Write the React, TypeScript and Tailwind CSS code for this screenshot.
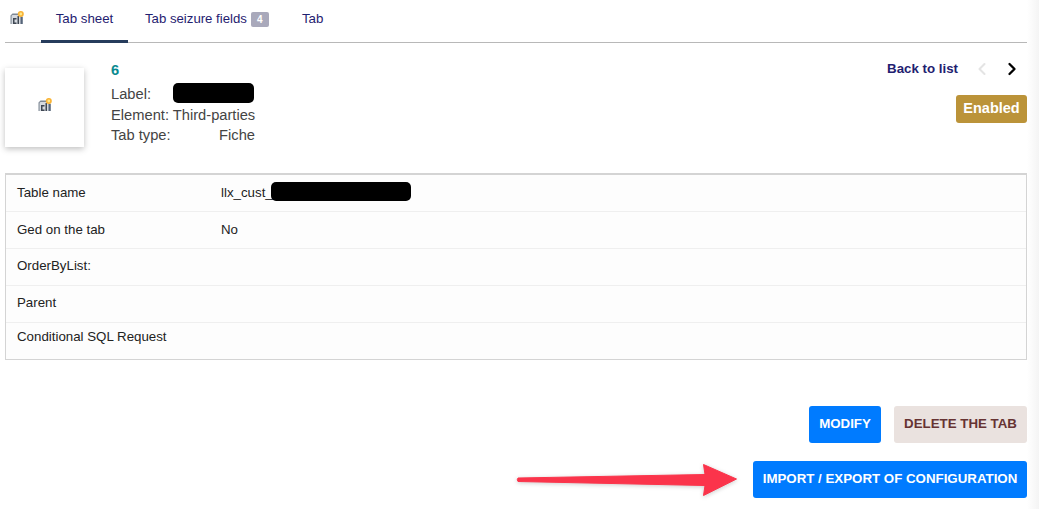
import { ChevronLeft, ChevronRight } from "lucide-react";

const rows = [
  { label: "Table name", value: "llx_cust_", hidden: true, pad: "pt-[10px]" },
  { label: "Ged on the tab", value: "No", pad: "pt-[10px]" },
  { label: "OrderByList:", value: "", pad: "pt-[9px]" },
  { label: "Parent", value: "", pad: "pt-[9px]" },
  { label: "Conditional SQL Request", value: "", pad: "pt-[6px]" },
];

function TabIcon({ className }: { className?: string }) {
  return (
    <svg viewBox="0 0 14 13" className={className}>
      <path d="M0.5 13V4.5L2.5 2.5H9V4.2H3L1.8 5.2V13z" fill="#7d8794" />
      <rect x="1.8" y="4.2" width="11" height="8.8" fill="#d5d9df" />
      <path d="M3 7H6.5V8.4H4.5V11.6H6.5V13H3z" fill="#3f4753" />
      <rect x="7.5" y="5" width="1.5" height="8" fill="#3f4753" />
      <rect x="10.5" y="6" width="2.2" height="7" fill="#56657a" />
      <circle cx="10.8" cy="3" r="3" fill="#f9b233" />
      <circle cx="10.8" cy="3" r="1.4" fill="#fde68a" />
    </svg>
  );
}

export default function App() {
  return (
    <div className="flex h-[509px] w-[1039px] overflow-hidden bg-white font-['Liberation_Sans',Arial,sans-serif] text-[13.3px] text-[#444]">
      <div className="w-[1027px] shrink-0 pl-[5px]">
        {/* Tabs */}
        <div className="flex h-[43px] border-b border-[#b8b8b8]">
          <div className="flex w-[36px] items-start pl-[5px] pt-[11px]">
            <TabIcon className="h-[13px] w-[14px]" />
          </div>
          <div className="-mb-px flex h-[43px] w-[87px] justify-center border-b-[3px] border-[#263c5c] pt-[9px] text-[#1f2170]">
            Tab sheet
          </div>
          <div className="flex items-start pl-[17px] pt-[9px] text-[13.2px] text-[#1f2170]">
            Tab seizure fields
            <span className="ml-[4px] mt-[3px] flex h-[15px] w-[18px] items-center justify-center rounded-[2px] bg-[#a9a9bb] text-[10px] font-bold text-white">
              4
            </span>
          </div>
          <div className="pl-[33px] pt-[9px] text-[#1f2170]">Tab</div>
        </div>

        {/* Card banner */}
        <div className="flex h-[130px] items-start">
          <div className="mt-[25px] flex h-[79px] w-[79px] items-center justify-center bg-white shadow-[0_2px_6px_rgba(0,0,0,0.25)]">
            <TabIcon className="-mt-[6px] h-[13px] w-[14px]" />
          </div>
          <div className="ml-[27px] mt-[16px] w-[144px] whitespace-nowrap text-[14.7px]">
            <div className="h-[25px] font-bold leading-[22px] text-[#0a8a8f]">6</div>
            <div className="flex h-[20px] items-center leading-[20px]">
              <span className="w-[62px]">Label:</span>
              <span className="-mt-[2px] h-[20px] w-[81px] rounded-[5px] bg-black" />
            </div>
            <div className="mt-[1px] h-[20px] leading-[20px]">Element: Third-parties</div>
            <div className="flex h-[20px] justify-between leading-[20px]">
              <span>Tab type:</span>
              <span>Fiche</span>
            </div>
          </div>
          <div className="ml-auto mt-[16px] flex flex-col items-end">
            <div className="flex h-[20px] items-center">
              <span className="font-bold text-[#1f2170]">Back to list</span>
              <ChevronLeft className="ml-[14px] h-[20px] w-[20px] text-[#e4e4e4]" strokeWidth={2.5} />
              <ChevronRight className="ml-[10px] mr-[5px] h-[20px] w-[20px] text-black" strokeWidth={2.8} />
            </div>
            <div className="mt-[16px] flex h-[28px] w-[71px] items-center justify-center rounded-[3px] bg-[#bb9339] text-[14.5px] font-bold text-white">
              Enabled
            </div>
          </div>
        </div>

        {/* Details */}
        <div className="h-[187px] border border-t-2 border-[#d4d4d4] bg-[#fdfdfd]">
          {rows.map((row) => (
            <div
              key={row.label}
              className={`flex h-[37px] border-b border-[#efefef] pl-[11px] leading-[15px] text-[#222] last:border-b-0 ${row.pad}`}
            >
              <span className="w-[204px]">{row.label}</span>
              <span className="flex h-[15px] items-center">
                {row.value}
                {row.hidden && <span className="-ml-[2px] -mt-[3px] h-[19px] w-[140px] rounded-[5px] bg-black" />}
              </span>
            </div>
          ))}
        </div>

        {/* Actions */}
        <div className="mt-[46px] flex justify-end gap-[13px]">
          <button className="h-[37px] w-[72px] rounded-[3px] bg-[#007bff] pb-[2px] font-bold text-white">
            MODIFY
          </button>
          <button className="h-[37px] w-[133px] rounded-[3px] bg-[#eae2df] pb-[2px] font-bold text-[#633]">
            DELETE THE TAB
          </button>
        </div>
        <div className="relative mt-[18px] flex justify-end">
          <svg
            viewBox="0 0 230 40"
            className="absolute left-[507px] top-0 h-[40px] w-[230px] drop-shadow-[0_1px_2px_rgba(0,0,0,0.2)]"
          >
            <path
              d="M6 17 L193 13.5 L191.5 3.5 L224.5 18 L191.5 34.5 L193 24.5 L6 20.5 Q4.5 18.8 6 17Z"
              fill="#fb344b"
              stroke="#fb344b"
              strokeLinejoin="round"
            />
          </svg>
          <button className="h-[37px] w-[274px] rounded-[3px] bg-[#007bff] pb-[2px] font-bold text-white">
            IMPORT / EXPORT OF CONFIGURATION
          </button>
        </div>
      </div>
      <div className="w-[12px] bg-gradient-to-r from-white to-[#f4f4f4]" />
    </div>
  );
}
